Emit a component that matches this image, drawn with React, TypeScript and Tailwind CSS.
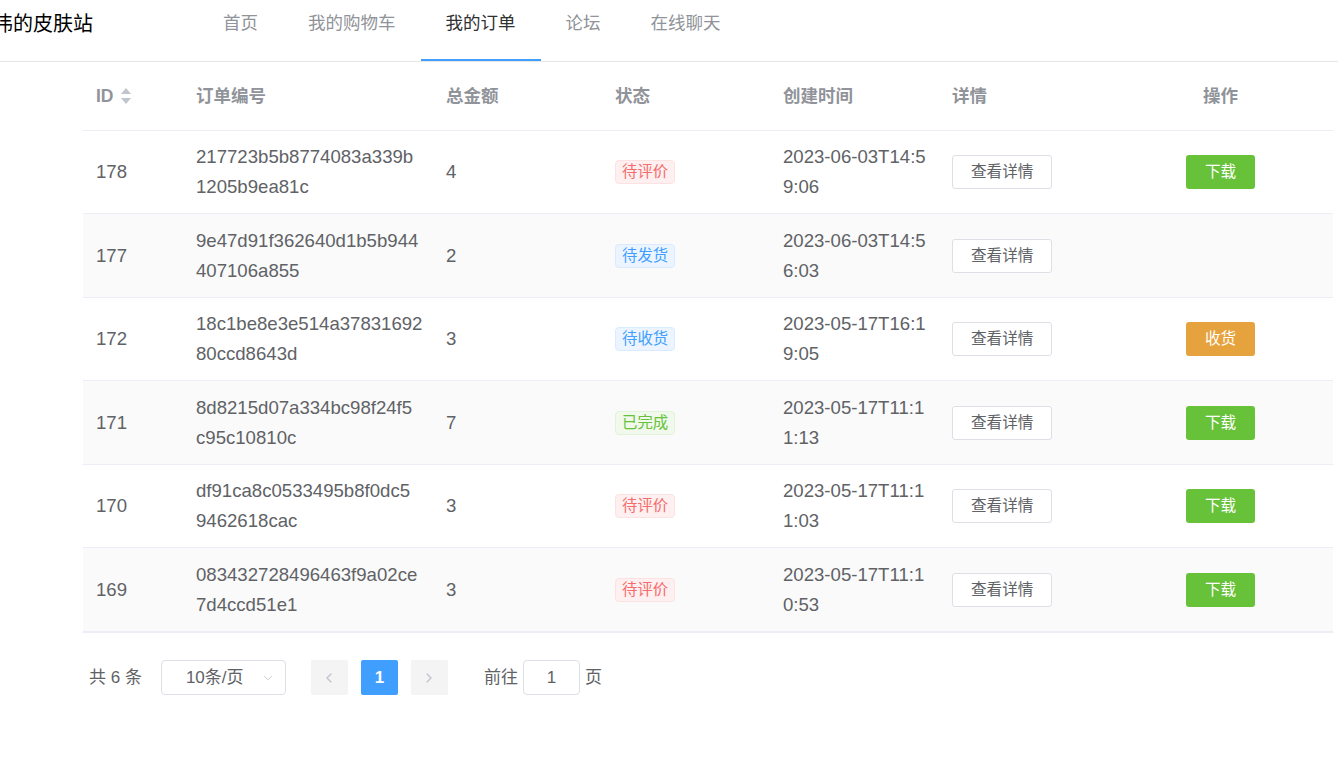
import { ChevronDown, ChevronLeft, ChevronRight } from "lucide-react";

type Order = {
  id: number;
  no: [string, string];
  amount: number;
  status: "review" | "ship" | "receive" | "done";
  time: [string, string];
  action?: "download" | "receive";
};

const orders: Order[] = [
  { id: 178, no: ["217723b5b8774083a339b", "1205b9ea81c"], amount: 4, status: "review", time: ["2023-06-03T14:5", "9:06"], action: "download" },
  { id: 177, no: ["9e47d91f362640d1b5b944", "407106a855"], amount: 2, status: "ship", time: ["2023-06-03T14:5", "6:03"] },
  { id: 172, no: ["18c1be8e3e514a37831692", "80ccd8643d"], amount: 3, status: "receive", time: ["2023-05-17T16:1", "9:05"], action: "receive" },
  { id: 171, no: ["8d8215d07a334bc98f24f5", "c95c10810c"], amount: 7, status: "done", time: ["2023-05-17T11:1", "1:13"], action: "download" },
  { id: 170, no: ["df91ca8c0533495b8f0dc5", "9462618cac"], amount: 3, status: "review", time: ["2023-05-17T11:1", "1:03"], action: "download" },
  { id: 169, no: ["083432728496463f9a02ce", "7d4ccd51e1"], amount: 3, status: "review", time: ["2023-05-17T11:1", "0:53"], action: "download" },
];

const font = { fontFamily: '"Liberation Sans", "Noto Sans CJK SC", sans-serif' };

const StatusTag = ({ status }: { status: Order["status"] }) => {
  if (status === "review")
    return <span className="inline-flex h-[24px] items-center rounded-[4px] border border-[#fde2e2] bg-[#fef0f0] px-[6px] text-[15.4px] text-[#f56c6c]">待评价</span>;
  if (status === "ship")
    return <span className="inline-flex h-[24px] items-center rounded-[4px] border border-[#d9ecff] bg-[#ecf5ff] px-[6px] text-[15.4px] text-[#409eff]">待发货</span>;
  if (status === "receive")
    return <span className="inline-flex h-[24px] items-center rounded-[4px] border border-[#d9ecff] bg-[#ecf5ff] px-[6px] text-[15.4px] text-[#409eff]">待收货</span>;
  return <span className="inline-flex h-[24px] items-center rounded-[4px] border border-[#e1f3d8] bg-[#f0f9eb] px-[6px] text-[15.4px] text-[#67c23a]">已完成</span>;
};

const SortCaret = () => (
  <svg width="12" height="18" viewBox="0 0 12 18" className="ml-[6px]">
    <path d="M6 1 L11 7 L1 7 Z" fill="#c0c4cc" />
    <path d="M6 17 L11 11 L1 11 Z" fill="#c0c4cc" />
  </svg>
);

const navItems = ["首页", "我的购物车", "我的订单", "论坛", "在线聊天"];

export default function App() {
  return (
    <div className="min-h-[757px] w-full overflow-hidden bg-white text-[#606266]" style={font}>
      {/* top bar */}
      <div className="flex h-[62px] border-b border-[#e6e6e6]">
        <div className="ml-[-7px] w-[205px] shrink-0 pt-[11px] text-[20px] leading-[26px] text-black">伟的皮肤站</div>
        <ul className="flex h-[61px]">
          {navItems.map((item) => (
            <li
              key={item}
              className={
                item === "我的订单"
                  ? "h-[61px] border-b-2 border-[#409eff] px-[25px] pt-[12px] text-[17.5px] leading-[22px] text-[#303133]"
                  : "h-[61px] px-[25px] pt-[12px] text-[17.5px] leading-[22px] text-[#909399]"
              }
            >
              {item}
            </li>
          ))}
        </ul>
      </div>

      {/* table */}
      <div className="ml-[83px] w-[1250px] border-b-2 border-[#ebeef5]">
        <div className="flex h-[69px] items-center border-b border-[#ebeef5] text-[17.5px] font-bold text-[#909399]">
          <div className="flex w-[100px] items-center px-[13px]">
            ID
            <SortCaret />
          </div>
          <div className="w-[250px] px-[13px]">订单编号</div>
          <div className="w-[169px] px-[13px]">总金额</div>
          <div className="w-[168px] px-[13px]">状态</div>
          <div className="w-[169px] px-[13px]">创建时间</div>
          <div className="w-[169px] px-[13px]">详情</div>
          <div className="w-[225px] px-[13px] text-center">操作</div>
        </div>
        {orders.map((o, i) => (
          <div
            key={o.id}
            className={
              (i % 2 === 1 ? "bg-[#fafafa] " : "bg-white ") +
              (i === orders.length - 1
                ? "flex h-[83px] items-center text-[18.6px] leading-[30px]"
                : i % 2 === 1
                  ? "flex h-[84px] items-center border-b border-[#ebeef5] text-[18.6px] leading-[30px]"
                  : "flex h-[83px] items-center border-b border-[#ebeef5] text-[18.6px] leading-[30px]")
            }
          >
            <div className="w-[100px] px-[13px]">{o.id}</div>
            <div className="w-[250px] px-[13px]">
              <div>{o.no[0]}</div>
              <div>{o.no[1]}</div>
            </div>
            <div className="w-[169px] px-[13px]">{o.amount}</div>
            <div className="flex w-[168px] px-[13px]">
              <StatusTag status={o.status} />
            </div>
            <div className="w-[169px] px-[13px]">
              <div>{o.time[0]}</div>
              <div>{o.time[1]}</div>
            </div>
            <div className="flex w-[169px] px-[13px]">
              <button className="h-[34px] rounded-[3px] border border-[#dcdfe6] bg-white px-[18px] text-[15.6px] leading-none text-[#606266]">
                查看详情
              </button>
            </div>
            <div className="flex w-[225px] justify-center px-[13px]">
              {o.action === "download" && (
                <button className="h-[34px] rounded-[3px] bg-[#67c23a] px-[19px] text-[15.6px] leading-none text-white">下载</button>
              )}
              {o.action === "receive" && (
                <button className="h-[34px] rounded-[3px] bg-[#e6a23c] px-[19px] text-[15.6px] leading-none text-white">收货</button>
              )}
            </div>
          </div>
        ))}
      </div>

      {/* pagination */}
      <div className="ml-[89px] mt-[27px] flex h-[35px] items-center text-[17px] text-[#606266]">
        <span className="mr-[19px]">共 6 条</span>
        <div className="relative flex h-[35px] w-[125px] items-center rounded-[4px] border border-[#dcdfe6] pl-[24px] text-[17px]">
          10条/页
          <ChevronDown size={14} strokeWidth={1.5} color="#c0c4cc" className="absolute right-[10px] top-[10px]" />
        </div>
        <button className="ml-[25px] flex h-[35px] w-[37px] items-center justify-center rounded-[2px] bg-[#f4f4f5]">
          <ChevronLeft size={16} strokeWidth={2} color="#c0c4cc" />
        </button>
        <button className="ml-[13px] flex h-[35px] w-[37px] items-center justify-center rounded-[2px] bg-[#409eff] text-[17px] font-bold text-white">
          1
        </button>
        <button className="ml-[13px] flex h-[35px] w-[37px] items-center justify-center rounded-[2px] bg-[#f4f4f5]">
          <ChevronRight size={16} strokeWidth={2} color="#c0c4cc" />
        </button>
        <span className="ml-[36px]">前往</span>
        <div className="ml-[5px] flex h-[35px] w-[57px] items-center justify-center rounded-[4px] border border-[#dcdfe6] text-[17px]">1</div>
        <span className="ml-[5px]">页</span>
      </div>
    </div>
  );
}
